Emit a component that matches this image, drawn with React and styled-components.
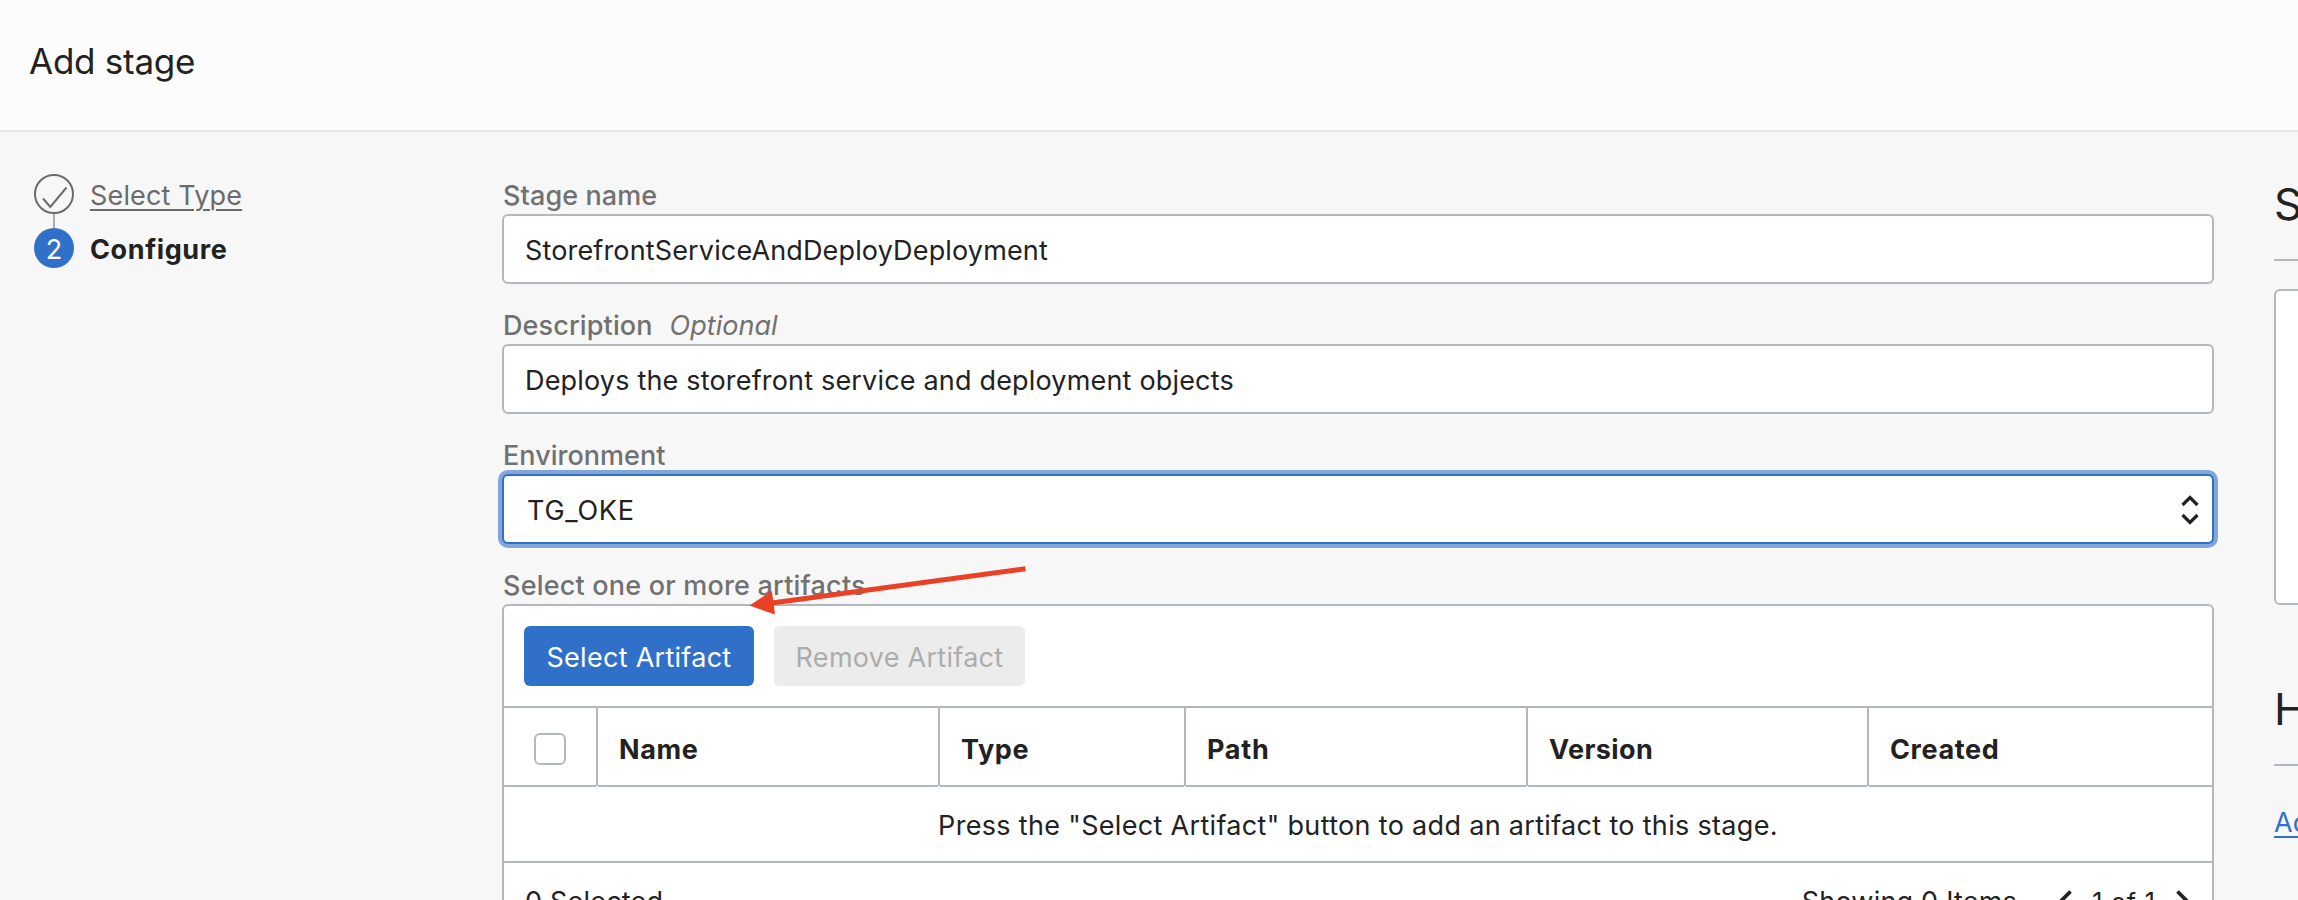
import React from "react";
import styled, { createGlobalStyle } from "styled-components";

const line = "#b3b8be";
const ink = "#222222";
const blue = "#3170c9";

const GlobalStyle = createGlobalStyle`
  *, *::before, *::after { box-sizing: border-box; }
  html, body { margin: 0; overflow: hidden; }
  body {
    background: #f7f7f7;
    color: ${ink};
    font-family: Inter, "Liberation Sans", sans-serif;
    font-size: 27px;
    line-height: 40px;
  }
`;

const Page = styled.div`
  position: relative;
  width: 2298px;
  height: 900px;
  overflow: hidden;
  display: flex;
  flex-direction: column;
`;

const Text = styled.span`
  letter-spacing: ${(p) => p.$track || 0}px;
  white-space: nowrap;
`;

const Header = styled.header`
  flex: none;
  height: 132px;
  padding: 37px 29px 0;
  background: #fcfcfc;
  border-bottom: 2px solid #e6e6e6;
`;

const Title = styled.h1`
  margin: 0;
  font-size: 35px;
  line-height: 48px;
  font-weight: 400;
`;

const Body = styled.div`
  flex: none;
  display: flex;
`;

const Steps = styled.ol`
  flex: none;
  list-style: none;
  width: 502px;
  margin: 0;
  padding: 42px 0 0 34px;
`;

const Step = styled.li`
  display: flex;
  align-items: center;
  gap: 16px;
  height: 40px;
  color: ${(p) => (p.$active ? ink : "#6b6b6b")};
  font-weight: ${(p) => (p.$active ? 700 : 400)};
`;

const StepLabel = styled(Text)`
  padding-top: 4px;
  text-decoration: ${(p) => (p.$link ? "underline" : "none")};
  text-decoration-thickness: 2px;
  text-underline-offset: 4px;
`;

const Connector = styled.li`
  width: 2px;
  height: 14px;
  margin-left: 19px;
  background: #adadad;
`;

const StepNumber = styled.span`
  width: 40px;
  height: 40px;
  border-radius: 50%;
  background: ${blue};
  color: #fff;
  font-weight: 400;
  line-height: 43px;
  text-align: center;
`;

const Form = styled.main`
  flex: none;
  width: 1712px;
  padding-top: 42px;
`;

const Field = styled.div`
  height: 130px;
`;

const Label = styled.div`
  display: flex;
  gap: 17px;
  height: 40px;
  padding: 2px 1px 0;
  color: #717171;
  font-weight: 500;
`;

const Optional = styled(Text)`
  font-style: italic;
  font-weight: 400;
`;

const Input = styled.div`
  display: flex;
  align-items: center;
  justify-content: space-between;
  height: 70px;
  padding: 4px 13px 0 ${(p) => (p.$focused ? 23 : 21)}px;
  background: #fff;
  border: 2px solid ${(p) => (p.$focused ? blue : line)};
  border-radius: 6px;
  box-shadow: ${(p) => (p.$focused ? "0 0 0 4px #82a5dc" : "none")};
`;

const SelectArrows = styled.svg`
  margin-bottom: 3px;
`;

const Panel = styled.section`
  background: #fff;
  border: 2px solid ${line};
  border-radius: 6px;
`;

const Toolbar = styled.div`
  display: flex;
  gap: 20px;
  height: 100px;
  padding: 20px;
`;

const Button = styled.button`
  width: ${(p) => p.$width}px;
  height: 60px;
  padding: 4px 0 0;
  border: 0;
  border-radius: 6px;
  background: ${blue};
  color: #fff;
  font: inherit;
  &:disabled {
    background: #ececec;
    color: #acacac;
  }
`;

const HeadRow = styled.div`
  display: grid;
  grid-template-columns: 92px 342px 246px 342px 341px 345px;
  height: 81px;
  border-top: 2px solid ${line};
`;

const HeadCell = styled.div`
  display: flex;
  align-items: center;
  position: relative;
  padding: 6px 0 0 21px;
  border-bottom: 2px solid ${line};
  font-weight: 700;
  & + & {
    border-left: 2px solid ${line};
  }
  & + &::after {
    content: "";
    position: absolute;
    left: -2px;
    bottom: -2px;
    width: 2px;
    height: 1px;
    background: #fff;
  }
`;

const Checkbox = styled.span`
  width: 32px;
  height: 32px;
  margin: 0 0 2px 9px;
  border: 2px solid ${line};
  border-radius: 6px;
`;

const EmptyRow = styled.div`
  height: 76px;
  padding-top: 19px;
  text-align: center;
  border-bottom: 2px solid ${line};
`;

const Footer = styled.div`
  display: flex;
  align-items: center;
  justify-content: space-between;
  height: 76px;
  padding: 2px 22px 0 21px;
`;

const Pager = styled.div`
  display: flex;
  align-items: center;
`;

const ItemCount = styled(Text)`
  margin-right: 41px;
`;

const PageCount = styled(Text)`
  width: 104px;
  font-size: 25px;
  text-align: center;
`;

const Aside = styled.aside`
  flex: none;
  width: 340px;
  margin-left: 60px;
  padding-top: 36px;
`;

const AsideTitle = styled.h2`
  height: 93px;
  margin: 0;
  padding-top: 9px;
  border-bottom: 2px solid ${line};
  font-size: 44px;
  line-height: 54px;
  font-weight: 400;
`;

const Preview = styled.div`
  height: 316px;
  margin: 28px 0 68px;
  background: #fff;
  border: 2px solid ${line};
  border-radius: 6px;
`;

const AsideLink = styled.a`
  display: block;
  margin-top: 37px;
  color: ${blue};
  text-decoration: underline;
  text-decoration-thickness: 2px;
  text-underline-offset: 4px;
`;

const Annotation = styled.svg`
  position: absolute;
  left: 740px;
  top: 560px;
`;

const Chevron = ({ d }) => (
  <svg width="14" height="24" viewBox="0 0 14 24" fill="none" stroke={ink} strokeWidth="3.8">
    <path d={d} />
  </svg>
);

const columns = [
  ["Name", 0.6],
  ["Type", 0.6],
  ["Path", 0.7],
  ["Version", 0.4],
  ["Created", 0.6],
];

export default function App() {
  return (
    <Page>
      <GlobalStyle />
      <Header>
        <Title>
          <Text $track={-0.25}>Add stage</Text>
        </Title>
      </Header>
      <Body>
        <Steps>
          <Step>
            <svg width="40" height="40" viewBox="0 0 40 40" fill="none" stroke="#6b6b6b" strokeWidth="2">
              <circle cx="20" cy="20" r="19" />
              <path d="M9 24.5L16.3 33L32.5 13.5" />
            </svg>
            <StepLabel $link $track={0.16}>Select Type</StepLabel>
          </Step>
          <Connector />
          <Step $active>
            <StepNumber>2</StepNumber>
            <StepLabel $track={0.6}>Configure</StepLabel>
          </Step>
        </Steps>
        <Form>
          <Field>
            <Label><Text $track={0.1}>Stage name</Text></Label>
            <Input><Text $track={0.15}>StorefrontServiceAndDeployDeployment</Text></Input>
          </Field>
          <Field>
            <Label><Text $track={0.12}>Description</Text><Optional>Optional</Optional></Label>
            <Input><Text $track={0.18}>Deploys the storefront service and deployment objects</Text></Input>
          </Field>
          <Field>
            <Label><Text $track={0.03}>Environment</Text></Label>
            <Input $focused>
              <Text $track={0.8}>TG_OKE</Text>
              <SelectArrows width="18" height="30" viewBox="0 0 18 30" fill="none" stroke={ink} strokeWidth="3.2">
                <path d="M1.5 10L9 2.5L16.5 10M1.5 20L9 27.5L16.5 20" />
              </SelectArrows>
            </Input>
          </Field>
          <Label><Text $track={0.2}>Select one or more artifacts</Text></Label>
          <Panel>
            <Toolbar>
              <Button $width={230}><Text $track={0.28}>Select Artifact</Text></Button>
              <Button $width={251} disabled><Text $track={0.28}>Remove Artifact</Text></Button>
            </Toolbar>
            <HeadRow>
              <HeadCell><Checkbox /></HeadCell>
              {columns.map(([name, track]) => (
                <HeadCell key={name}><Text $track={track}>{name}</Text></HeadCell>
              ))}
            </HeadRow>
            <EmptyRow>
              <Text $track={0.32}>Press the "Select Artifact" button to add an artifact to this stage.</Text>
            </EmptyRow>
            <Footer>
              <Text $track={0.2}>0 Selected</Text>
              <Pager>
                <ItemCount $track={0.2}>Showing 0 Items</ItemCount>
                <Chevron d="M12.5 1.5L2 12L12.5 22.5" />
                <PageCount $track={0.8}>1 of 1</PageCount>
                <Chevron d="M1.5 1.5L12 12L1.5 22.5" />
              </Pager>
            </Footer>
          </Panel>
        </Form>
        <Aside>
          <AsideTitle>S</AsideTitle>
          <Preview />
          <AsideTitle>H</AsideTitle>
          <AsideLink href="#">Ad</AsideLink>
        </Aside>
      </Body>
      <Annotation width="300" height="60" viewBox="0 0 300 60">
        <path d="M32 43L285.5 8.8" stroke="#ea4025" strokeWidth="5" />
        <path d="M9.5 45.6L31.8 30.8L35 54.6Z" fill="#ea4025" />
      </Annotation>
    </Page>
  );
}
